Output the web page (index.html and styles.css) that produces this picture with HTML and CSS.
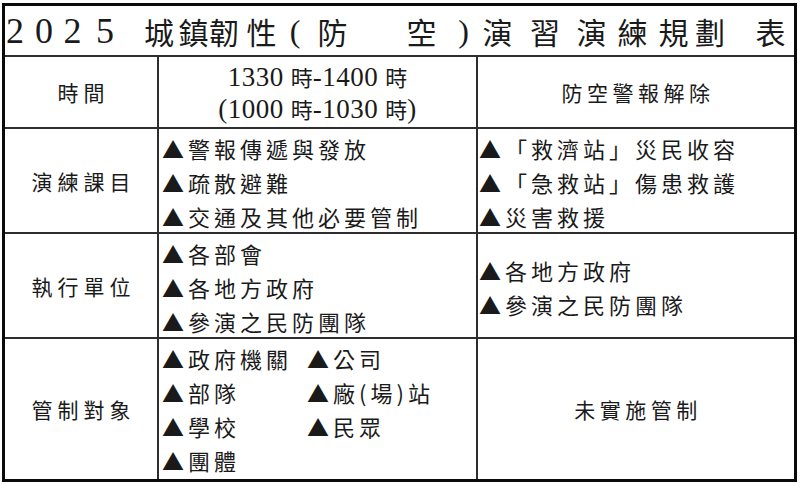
FILE: index.html
```html
<!DOCTYPE html>
<html lang="zh-Hant">
<head>
<meta charset="utf-8">
<title>2025 城鎮韌性（防空）演習演練規劃表</title>
<link rel="stylesheet" href="styles.css">
</head>
<body>
<div class="sheet">
  <div class="title">
    <span class="d">2</span><span class="d">0</span><span class="d">2</span><span class="d">5</span>
    <span>城</span><span>鎮</span><span>韌</span><span>性</span><span class="p">(</span><span>防</span><span>空</span><span class="p">)</span><span>演</span><span>習</span><span>演</span><span>練</span><span>規</span><span>劃</span><span>表</span>
  </div>

  <div class="cell label">時間</div>
  <div class="cell time">
    <div><span class="num">1330</span> 時<span class="num">-1400</span> 時</div>
    <div><span class="num">(1000</span> 時<span class="num">-1030</span> 時<span class="num">)</span></div>
  </div>
  <div class="cell label wide">防空警報解除</div>

  <div class="cell label">演練課目</div>
  <div class="cell list">
    <div><span class="tri">▲</span>警報傳遞與發放</div>
    <div><span class="tri">▲</span>疏散避難</div>
    <div><span class="tri">▲</span>交通及其他必要管制</div>
  </div>
  <div class="cell list right">
    <div><span class="tri">▲</span>「救濟站」災民收容</div>
    <div><span class="tri">▲</span>「急救站」傷患救護</div>
    <div><span class="tri">▲</span>災害救援</div>
  </div>

  <div class="cell label">執行單位</div>
  <div class="cell list">
    <div><span class="tri">▲</span>各部會</div>
    <div><span class="tri">▲</span>各地方政府</div>
    <div><span class="tri">▲</span>參演之民防團隊</div>
  </div>
  <div class="cell list right centered">
    <div><span class="tri">▲</span>各地方政府</div>
    <div><span class="tri">▲</span>參演之民防團隊</div>
  </div>

  <div class="cell label">管制對象</div>
  <div class="cell list targets">
    <div><span class="tri">▲</span>政府機關</div>
    <div><span class="tri">▲</span>公司</div>
    <div><span class="tri">▲</span>部隊</div>
    <div><span class="tri">▲</span>廠(場)站</div>
    <div><span class="tri">▲</span>學校</div>
    <div><span class="tri">▲</span>民眾</div>
    <div><span class="tri">▲</span>團體</div>
  </div>
  <div class="cell label wide">未實施管制</div>
</div>
</body>
</html>
```

FILE: styles.css
```css
html, body {
  margin: 0;
  padding: 0;
  background: #fff;
}

body {
  font-family: "Noto Sans CJK TC", "Noto Sans CJK JP", sans-serif;
  color: #1a1a1a;
}

.sheet {
  display: grid;
  grid-template-columns: 152px 317px 316px;
  grid-template-rows: 49px 70px 103px 103px 140px;
  gap: 2px;
  width: 789px;
  margin: 3px 0 0 2px;
  border: 3px solid #0a0a0a;
  background: #2e2e2e;
}

.title {
  grid-column: 1 / -1;
  background: #fff;
  display: grid;
  grid-template-columns: 29px 28.5px 32.5px 54px 34.5px 30.5px 37.5px 33.5px 37.5px 89px 42px 34px 47.5px 46.5px 41px 41px 36.5px 60.5px 1fr;
  align-items: center;
  padding-left: 10px;
  font-size: 30px;
  line-height: 1;
}

.title span {
  width: 0;
  display: flex;
  justify-content: center;
  white-space: nowrap;
}

.title .d {
  font-family: "Liberation Serif", serif;
  font-size: 36px;
}

.title .p {
  font-family: "Liberation Serif", serif;
  font-size: 32px;
  font-weight: 300;
}

.cell {
  background: #fff;
}

.label {
  display: flex;
  align-items: center;
  justify-content: center;
  font-size: 21px;
  letter-spacing: 5px;
  padding-left: 5px;
}

.label.wide {
  letter-spacing: 4.5px;
  padding-left: 4px;
}

.time {
  display: flex;
  flex-direction: column;
  justify-content: center;
  align-items: center;
  font-size: 22px;
  line-height: 31px;
  padding-top: 1px;
  word-spacing: 2px;
}

.num {
  font-family: "Liberation Serif", serif;
  font-size: 27px;
  letter-spacing: 0.5px;
}

.list {
  font-size: 22px;
  letter-spacing: 4px;
  line-height: 34px;
  padding: 2px 0 0 3px;
  white-space: nowrap;
}

.list.right {
  padding-left: 1px;
}

.list.centered {
  display: flex;
  flex-direction: column;
  justify-content: center;
  padding-top: 3px;
}

.tri {
  letter-spacing: 0;
  margin-right: 4px;
}

.targets {
  display: grid;
  grid-template-columns: 145px 1fr;
  grid-auto-rows: 34px;
}
```
